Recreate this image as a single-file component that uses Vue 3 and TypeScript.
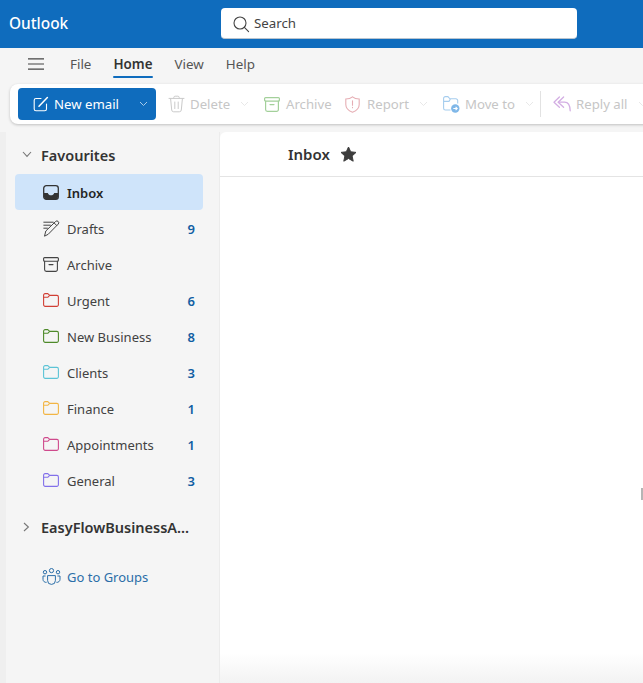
<script setup lang="ts">
interface FolderItem {
  label: string;
  count?: number;
  color?: string;
  icon: "inbox" | "drafts" | "archive" | "folder";
  active?: boolean;
}

const tabs = ["File", "Home", "View", "Help"];

const folders: FolderItem[] = [
  { label: "Inbox", icon: "inbox", active: true },
  { label: "Drafts", icon: "drafts", count: 9 },
  { label: "Archive", icon: "archive" },
  { label: "Urgent", icon: "folder", count: 6, color: "#d13f35" },
  { label: "New Business", icon: "folder", count: 8, color: "#4e8a2a" },
  { label: "Clients", icon: "folder", count: 3, color: "#5cc4d6" },
  { label: "Finance", icon: "folder", count: 1, color: "#f2b544" },
  { label: "Appointments", icon: "folder", count: 1, color: "#cf4a8c" },
  { label: "General", icon: "folder", count: 3, color: "#8270ea" },
];
</script>

<template>
  <div class="app">
    <header class="topbar">
      <span class="brand">Outlook</span>
      <div class="search">
        <svg class="search-icon" width="18" height="18" viewBox="0 0 18 18" fill="none" stroke="#444" stroke-width="1.1">
          <circle cx="8" cy="8" r="6" />
          <path d="M12.4 12.4 16.6 16.6" stroke-linecap="round" />
        </svg>
        <span>Search</span>
      </div>
    </header>

    <nav class="tabs">
      <svg class="burger" width="16" height="12" viewBox="0 0 16 12" stroke="#444" stroke-width="1.2">
        <path d="M0 .8h16M0 6h16M0 11.2h16" />
      </svg>
      <span v-for="tab in tabs" :key="tab" class="tab" :class="{ current: tab === 'Home' }">{{ tab }}</span>
    </nav>

    <div class="toolbar">
      <div class="new-email">
        <svg width="16" height="16" viewBox="0 0 16 16" fill="none" stroke="#fff" stroke-width="1.1" stroke-linecap="round">
          <path d="M8 2.5H3a1.8 1.8 0 0 0-1.8 1.8V13A1.8 1.8 0 0 0 3 14.8h8.7a1.8 1.8 0 0 0 1.8-1.8V8" />
          <path d="M6 10.2 14.4 1.6" stroke-width="1.5" />
        </svg>
        <span class="new-label">New email</span>
        <svg class="new-chevron" width="9" height="6" viewBox="0 0 9 6" fill="none" stroke="#a8cbea"><path d="M1 1l3.5 3.5L8 1" /></svg>
      </div>

      <div class="tool tool-delete">
        <svg width="17" height="18" viewBox="0 0 17 18" fill="none" stroke="#cacaca" stroke-width="1" stroke-linecap="round">
          <path d="M1 3.4h15M5.8 3.2V2.4a1.4 1.4 0 0 1 1.4-1.2h2.6a1.4 1.4 0 0 1 1.4 1.2v.8" />
          <path d="M2.6 3.6 3.7 15a2 2 0 0 0 2 1.8h5.6a2 2 0 0 0 2-1.8l1.1-11.4" />
          <path d="M6.8 7v6.6M10.2 7v6.6" />
        </svg>
        <span>Delete</span>
        <svg class="chev" width="9" height="6" viewBox="0 0 9 6" fill="none" stroke="#e8e8e8"><path d="M1 1l3.5 3.5L8 1" /></svg>
      </div>

      <div class="tool tool-archive">
        <svg width="16" height="15" viewBox="0 0 16 15" fill="none" stroke="#a3d09a" stroke-width="1.2" stroke-linecap="round">
          <rect x=".6" y=".6" width="14.8" height="3.6" rx="1" />
          <path d="M1.6 4.2v8.4A1.8 1.8 0 0 0 3.4 14.4h9.2a1.8 1.8 0 0 0 1.8-1.8V4.2M6 7.6h4" />
        </svg>
        <span>Archive</span>
      </div>

      <div class="tool tool-report">
        <svg width="15" height="17" viewBox="0 0 15 17" fill="none" stroke="#e6aeb4" stroke-width="1.1" stroke-linecap="round">
          <path d="M7.5.8C5.8 2.3 3.5 3 .8 3v5.4c0 3.5 2.2 6 6.7 7.8 4.5-1.8 6.7-4.3 6.7-7.8V3C11.500 3 9.200 2.300 7.500.8Z" />
          <path d="M7.500 4.800v4.400M7.500 11.400v.4" />
        </svg>
        <span>Report</span>
        <svg class="chev" width="9" height="6" viewBox="0 0 9 6" fill="none" stroke="#e8e8e8"><path d="M1 1l3.500 3.500L8 1" /></svg>
      </div>

      <div class="tool tool-move">
        <svg width="17" height="17" viewBox="0 0 17 17" fill="none" stroke="#a6cdee" stroke-width="1.1">
          <path d="M7.500 14H2.400A1.800 1.800 0 0 1 .6 12.200V2.400A1.800 1.800 0 0 1 2.400.6h2.500l2 2.200h6A1.800 1.800 0 0 1 14.700 4.600v3" />
          <path d="M.8 5.400h5.200l1.400-2.400" />
          <circle cx="12.300" cy="12.500" r="4.200" fill="#7fb7e8" stroke="none" />
          <path d="M10.300 12.500h3.800M12.600 10.900l1.600 1.600-1.600 1.600" stroke="#fff" />
        </svg>
        <span>Move to</span>
        <svg class="chev" width="9" height="6" viewBox="0 0 9 6" fill="none" stroke="#e8e8e8"><path d="M1 1l3.500 3.500L8 1" /></svg>
      </div>

      <i class="divider"></i>

      <div class="tool tool-reply">
        <svg width="18" height="16" viewBox="0 0 18 16" fill="none" stroke="#d3aee3" stroke-width="1.3" stroke-linecap="round" stroke-linejoin="round">
          <path d="M6.400 1 1 6.200l5.400 5" />
          <path d="M10.600 1 5.200 6.200l5.400 5" />
          <path d="M5.400 6.200h6.200c3.300 0 5.400 2.600 5.600 8.600" />
        </svg>
        <span>Reply all</span>
        <svg class="chev" width="9" height="6" viewBox="0 0 9 6" fill="none" stroke="#e8e8e8"><path d="M1 1l3.500 3.500L8 1" /></svg>
      </div>
    </div>

    <div class="body">
      <aside class="sidebar">
        <div class="group-head">
          <svg width="10" height="7" viewBox="0 0 10 7" fill="none" stroke="#777" stroke-width="1.1"><path d="M1 1l4 4.400L9 1" /></svg>
          <span>Favourites</span>
        </div>

        <div v-for="item in folders" :key="item.label" class="item" :class="{ active: item.active }">
          <span class="item-icon">
            <svg v-if="item.icon === 'inbox'" width="16" height="15" viewBox="0 0 16 15" fill="none">
              <rect x=".7" y=".7" width="14.600" height="13.600" rx="2.600" stroke="#333" stroke-width="1.300" />
              <path d="M1 8h3.800c.5 1.500 1.700 2.300 3.200 2.300s2.700-.8 3.200-2.300H15v4a2.400 2.400 0 0 1-2.400 2.400H3.400A2.400 2.400 0 0 1 1 12Z" fill="#333" />
            </svg>
            <svg v-else-if="item.icon === 'drafts'" width="17" height="17" viewBox="0 0 17 17" fill="none" stroke="#444" stroke-width="1" stroke-linecap="round" stroke-linejoin="round">
              <path d="M.8 2.200h9.400M.8 5.200h6.600M.8 8.200h3.600" />
              <path d="M1.600 15.800 2.800 11 12.600 1.500a1.800 1.800 0 0 1 2.600 2.600L5.500 14Z" />
              <path d="M11.200 3 13.700 5.500" />
            </svg>
            <svg v-else-if="item.icon === 'archive'" width="16" height="15" viewBox="0 0 16 15" fill="none" stroke="#444" stroke-width="1.100" stroke-linecap="round">
              <rect x=".6" y=".6" width="14.800" height="3.600" rx="1" />
              <path d="M1.600 4.200v8.400A1.800 1.800 0 0 0 3.400 14.400h9.200a1.800 1.800 0 0 0 1.800-1.800V4.200M6 7.600h4" />
            </svg>
            <svg v-else width="16" height="14" viewBox="0 0 16 14" fill="none" :stroke="item.color" stroke-width="1.100" stroke-linejoin="round">
              <path d="M.6 2.100A1.500 1.500 0 0 1 2.100.6h2.700l1.900 1.800h7.200a1.500 1.500 0 0 1 1.500 1.500v7.900a1.600 1.600 0 0 1-1.600 1.600H2.200a1.600 1.600 0 0 1-1.600-1.600Z" />
              <path d="M.6 4.300h4.100l2-1.900" />
            </svg>
          </span>
          <span class="item-label">{{ item.label }}</span>
          <span v-if="item.count" class="item-count">{{ item.count }}</span>
        </div>

        <div class="group-head account">
          <svg width="7" height="10" viewBox="0 0 7 10" fill="none" stroke="#777" stroke-width="1.100"><path d="M1 1l4.400 4L1 9" /></svg>
          <span>EasyFlowBusinessA...</span>
        </div>

        <div class="item groups-link">
          <span class="item-icon">
            <svg width="19" height="17" viewBox="0 0 19 17" fill="none" stroke="#2a6ea8" stroke-width="1">
              <circle cx="9.500" cy="2.600" r="2.100" />
              <circle cx="3" cy="4.200" r="1.700" />
              <circle cx="16" cy="4.200" r="1.700" />
              <path d="M5.600 7.600h7.800v4.900a3.900 3.900 0 0 1-7.800 0Z" />
              <path d="M3.600 8H1v3.400a3 3 0 0 0 3.600 2.900M15.400 8H18v3.400a3 3 0 0 1-3.600 2.900" />
            </svg>
          </span>
          <span class="item-label">Go to Groups</span>
        </div>
      </aside>

      <main class="pane">
        <div class="pane-head">
          <span>Inbox</span>
          <svg width="17" height="16" viewBox="0 0 17 16" fill="#3d3d3d" stroke="#3d3d3d" stroke-width="1" stroke-linejoin="round">
            <path d="M8.500 1l2.200 4.800 5.300.6-3.900 3.600 1.100 5.200-4.700-2.700-4.700 2.700 1.100-5.200L1 6.400l5.300-.6Z" />
          </svg>
        </div>
        <i class="edge-mark"></i>
        <div class="fade"></div>
      </main>
    </div>
  </div>
</template>

<style>
html,
body {
  margin: 0;
  overflow: hidden;
}
</style>

<style scoped>
.app {
  width: 643px;
  height: 683px;
  display: flex;
  flex-direction: column;
  overflow: hidden;
  background: #f5f5f5;
  font-family: "Noto Sans", "Open Sans", sans-serif;
  color: #333;
}

.topbar {
  flex: none;
  height: 48px;
  box-sizing: border-box;
  padding: 8px 0 0 9px;
  display: flex;
  align-items: flex-start;
  background: #0f6cbd;
}

.brand {
  width: 212px;
  line-height: 32px;
  font-size: 15.400px;
  font-weight: 500;
  color: #fff;
}

.search {
  width: 356px;
  height: 31px;
  box-sizing: border-box;
  padding-left: 11px;
  display: flex;
  align-items: center;
  gap: 4px;
  background: #fff;
  border-radius: 4px;
  border-bottom: 1px solid #b9c4cf;
  font-size: 13.300px;
  color: #444;
}

.search-icon {
  margin-top: 2px;
}

.tabs {
  flex: none;
  height: 36px;
  box-sizing: border-box;
  padding: 0 0 4px 28px;
  display: flex;
  align-items: center;
  font-size: 13.400px;
  color: #555;
}

.burger {
  margin-right: 26px;
}

.tab {
  position: relative;
  margin-right: 22px;
  line-height: 28px;
}

.tab.current {
  font-weight: 600;
  color: #333;
}

.tab.current::after {
  content: "";
  position: absolute;
  left: 0;
  right: 0;
  bottom: 0;
  height: 2px;
  background: #0f6cbd;
  border-radius: 1px;
}

.toolbar {
  flex: none;
  width: 700px;
  height: 40px;
  box-sizing: border-box;
  margin-left: 10px;
  padding-left: 8px;
  display: flex;
  align-items: center;
  background: #fff;
  border-radius: 8px;
  box-shadow: 0 1px 3px rgba(0, 0, 0, 0.22);
  font-size: 13.200px;
  color: #c6c6c6;
}

.new-email {
  width: 138px;
  height: 32px;
  box-sizing: border-box;
  padding-left: 15px;
  margin-right: 12px;
  display: flex;
  align-items: center;
  background: #0f6cbd;
  border-radius: 4px;
  color: #fff;
}

.new-label {
  margin-left: 5px;
}

.new-chevron {
  margin-left: auto;
  margin-right: 8px;
}

.tool {
  display: flex;
  align-items: center;
  flex: none;
}

.tool span {
  margin-left: 6px;
}

.chev {
  margin-left: 10px;
}

.tool-delete {
  width: 96px;
}

.tool-delete span {
  margin-left: 5px;
}

.tool-archive {
  width: 81px;
}

.tool-report {
  width: 98px;
}

.tool-report span {
  margin-left: 7px;
}

.tool-move {
  width: 97px;
}

.tool-move span {
  margin-left: 5px;
}

.tool-reply span {
  margin-left: 5px;
}

.divider {
  width: 1px;
  height: 26px;
  margin-right: 12px;
  background: #e2e2e2;
}

.body {
  flex: 1;
  min-height: 0;
  display: flex;
  margin-top: 8px;
}

.sidebar {
  flex: none;
  width: 220px;
  box-sizing: border-box;
  padding: 5px 16px 0 15px;
  border-right: 1px solid #ececec;
  box-shadow: inset 6px 0 0 #efefef;
}

.group-head {
  height: 37px;
  box-sizing: border-box;
  padding: 0 0 2px 7px;
  display: flex;
  align-items: center;
  gap: 9px;
  font-size: 14.500px;
  font-weight: 600;
  color: #333;
}

.account {
  height: 36px;
  margin-top: 11px;
  gap: 11px;
  padding: 0 0 0 8px;
}

.item {
  height: 36px;
  display: flex;
  align-items: center;
  border-radius: 4px;
  font-size: 13px;
  color: #424242;
}

.item.active {
  background: #cfe4fa;
  color: #242424;
  font-weight: 600;
}

.item-icon {
  width: 52px;
  box-sizing: border-box;
  padding-left: 28px;
  display: flex;
  flex: none;
}

.item-label {
  flex: 1;
  padding-top: 1px;
}

.item-count {
  margin-right: 8px;
  padding-top: 1px;
  font-weight: 600;
  color: #115ea3;
}

.groups-link {
  margin-top: 13px;
  color: #2a6ea8;
}

.groups-link .item-icon {
  padding-left: 27px;
}

.pane {
  position: relative;
  flex: 1;
  background: #fff;
  border-top-left-radius: 6px;
}

.pane-head {
  height: 45px;
  box-sizing: border-box;
  padding-left: 68px;
  display: flex;
  align-items: center;
  gap: 10px;
  border-bottom: 1px solid #e4e4e4;
  font-size: 15px;
  font-weight: 600;
  color: #333;
}

.edge-mark {
  position: absolute;
  right: 0;
  top: 356px;
  width: 2px;
  height: 12px;
  background: #b5b5b5;
}

.fade {
  position: absolute;
  left: 0;
  right: 0;
  bottom: 0;
  height: 30px;
  background: linear-gradient(to bottom, rgba(245, 245, 245, 0), #f3f3f3);
}
</style>
